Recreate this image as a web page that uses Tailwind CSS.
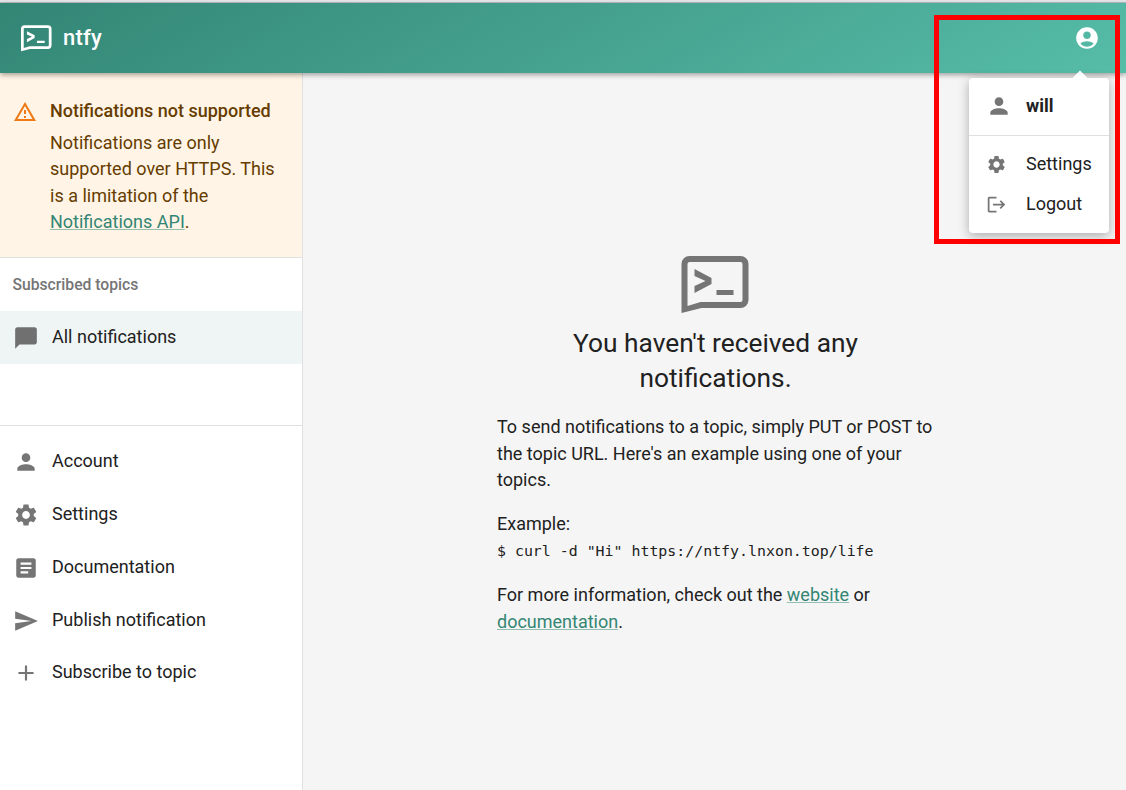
<!DOCTYPE html>
<html lang="en">
<head>
  <meta charset="UTF-8">
  <script src="https://cdn.jsdelivr.net/npm/@tailwindcss/browser@4"></script>
  <title>ntfy</title>
</head>
<body class="font-['Roboto',sans-serif] text-[18px] leading-[26.5px] text-[#212121] overflow-hidden">
  <div class="relative w-[1126px] h-[790px] flex flex-col bg-white overflow-hidden">
    <div class="h-[3px] bg-[#e4e6ea] border-b border-[#b9bcc0]"></div>

    <!-- Header -->
    <header class="relative z-10 h-[70px] flex items-center justify-between pl-[21px] pr-[26px] bg-linear-[150deg,#338574_0%,#56bda8_100%] text-white shadow-[0_2px_5px_rgba(0,0,0,0.35)]">
      <div class="flex items-center gap-[11px]">
        <svg class="w-[31px] h-[27px] mt-px fill-white" viewBox="0 0 68 58"><path fill-rule="evenodd" d="M8 0H59a8 8 0 0 1 8 8V44a8 8 0 0 1-8 8H20L0 57V8a8 8 0 0 1 8-8zM8 6a2 2 0 0 0-2 2V50L19 46H59a2 2 0 0 0 2-2V8a2 2 0 0 0-2-2zM13 13L30 22V28L13 37V30L24 25L13 20zM35 34H52V39H35z"/></svg>
        <span class="text-[22px] font-medium tracking-[0.2px]">ntfy</span>
      </div>
      <svg class="w-[26px] h-[26px] -mt-[1px] fill-white" viewBox="0 0 24 24"><path d="M12 2C6.48 2 2 6.48 2 12s4.48 10 10 10 10-4.48 10-10S17.52 2 12 2zm0 4c1.93 0 3.5 1.57 3.5 3.5S13.93 13 12 13s-3.5-1.57-3.5-3.5S10.07 6 12 6zm0 14c-2.03 0-4.43-.82-6.14-2.88C7.55 15.8 9.68 15 12 15s4.45.8 6.14 2.12C16.43 19.18 14.03 20 12 20z"/></svg>
    </header>

    <div class="flex flex-1 min-h-0">
      <!-- Sidebar -->
      <aside class="w-[303px] shrink-0 bg-white border-r border-[#e0e0e0] flex flex-col">
        <div class="h-[185px] bg-[#fff4e5] border-b border-[#e0e0e0] pl-[13px] pr-4 pt-[25px] flex gap-[13px] text-[#663c00]">
          <svg class="w-[24px] h-[24px] mt-[2px] shrink-0 fill-[#ed7a17]" viewBox="0 0 24 24"><path d="M12 5.99 19.53 19H4.47L12 5.99M12 2 1 21h22L12 2zm1 14h-2v2h2v-2zm0-6h-2v4h2v-4z"/></svg>
          <div>
            <div class="font-medium">Notifications not supported</div>
            <p class="mt-[5px]">Notifications are only supported over HTTPS. This is a limitation of the <a class="text-[#338574] underline decoration-[#338574]/50">Notifications API</a>.</p>
          </div>
        </div>
        <div class="h-[53px] pl-[12.5px] pt-[14px] text-[15.7px] font-medium text-[#757575]">Subscribed topics</div>
        <div class="h-[53px] bg-[#eff4f4] pl-[13px] flex items-center gap-[13px]">
          <svg class="w-[26px] h-[26px] fill-[#707070]" viewBox="0 0 24 24"><path d="M20 2H4c-1.1 0-1.99.9-1.99 2L2 22l4-4h14c1.1 0 2-.9 2-2V4c0-1.1-.9-2-2-2z"/></svg>
          <span>All notifications</span>
        </div>
        <div class="h-[62px] border-b border-[#e0e0e0]"></div>
        <nav class="pt-[9px]">
          <div class="h-[53px] pl-[13px] flex items-center gap-[13px]">
            <svg class="w-[26px] h-[26px] fill-[#757575]" viewBox="0 0 24 24"><path d="M12 12c2.21 0 4-1.79 4-4s-1.79-4-4-4-4 1.79-4 4 1.79 4 4 4zm0 2c-2.67 0-8 1.34-8 4v2h16v-2c0-2.66-5.33-4-8-4z"/></svg>
            <span>Account</span>
          </div>
          <div class="h-[53px] pl-[13px] flex items-center gap-[13px]">
            <svg class="w-[26px] h-[26px] fill-[#757575]" viewBox="0 0 24 24"><path d="M19.14 12.94c.04-.3.06-.61.06-.94 0-.32-.02-.64-.07-.94l2.03-1.58c.18-.14.23-.41.12-.61l-1.92-3.32c-.12-.22-.37-.29-.59-.22l-2.39.96c-.5-.38-1.03-.7-1.62-.94l-.36-2.54c-.04-.24-.24-.41-.48-.41h-3.84c-.24 0-.43.17-.47.41l-.36 2.54c-.59.24-1.13.57-1.62.94l-2.39-.96c-.22-.08-.47 0-.59.22L2.74 8.87c-.12.21-.08.47.12.61l2.03 1.58c-.05.3-.09.63-.09.94s.02.64.07.94l-2.03 1.58c-.18.14-.23.41-.12.61l1.92 3.32c.12.22.37.29.59.22l2.39-.96c.5.38 1.03.7 1.62.94l.36 2.54c.05.24.24.41.48.41h3.84c.24 0 .44-.17.47-.41l.36-2.54c.59-.24 1.13-.56 1.62-.94l2.39.96c.22.08.47 0 .59-.22l1.92-3.32c.12-.22.07-.47-.12-.61l-2.01-1.58zM12 15.6c-1.98 0-3.6-1.62-3.6-3.6s1.62-3.6 3.6-3.6 3.6 1.62 3.6 3.6-1.62 3.6-3.6 3.6z"/></svg>
            <span>Settings</span>
          </div>
          <div class="h-[53px] pl-[13px] flex items-center gap-[13px]">
            <svg class="w-[26px] h-[26px] fill-[#757575]" viewBox="0 0 24 24"><path d="M19 3H5c-1.1 0-2 .9-2 2v14c0 1.1.9 2 2 2h14c1.1 0 2-.9 2-2V5c0-1.1-.9-2-2-2zm-5 14H7v-2h7v2zm3-4H7v-2h10v2zm0-4H7V7h10v2z"/></svg>
            <span>Documentation</span>
          </div>
          <div class="h-[53px] pl-[13px] flex items-center gap-[13px]">
            <svg class="w-[26px] h-[26px] fill-[#757575]" viewBox="0 0 24 24"><path d="M2.01 21 23 12 2.01 3 2 10l15 2-15 2z"/></svg>
            <span>Publish notification</span>
          </div>
          <div class="h-[53px] -mt-px pl-[13px] flex items-center gap-[13px]">
            <svg class="w-[26px] h-[26px] fill-[#757575]" viewBox="0 0 24 24"><path d="M19 13h-6v6h-2v-6H5v-2h6V5h2v6h6v2z"/></svg>
            <span>Subscribe to topic</span>
          </div>
        </nav>
      </aside>

      <!-- Main -->
      <main class="flex-1 bg-[#f5f5f5] pt-[183px]">
        <div class="w-[437px] ml-[194px]">
          <div class="flex flex-col items-center">
            <svg class="w-[69px] h-[58px] fill-[#757575]" viewBox="0 0 68 58"><path fill-rule="evenodd" d="M8 0H59a8 8 0 0 1 8 8V44a8 8 0 0 1-8 8H20L0 57V8a8 8 0 0 1 8-8zM8 6a2 2 0 0 0-2 2V50L19 46H59a2 2 0 0 0 2-2V8a2 2 0 0 0-2-2zM13 13L30 22V28L13 37V30L24 25L13 20zM35 34H52V39H35z"/></svg>
            <h2 class="mt-[12px] text-[26.3px] leading-[35px] text-center w-[340px]">You haven't received any notifications.</h2>
          </div>
          <p class="mt-[18px]">To send notifications to a topic, simply PUT or POST to the topic URL. Here's an example using one of your topics.</p>
          <p class="mt-[17px]">Example:<br><code class="font-['DejaVu_Sans_Mono',monospace] text-[14.9px] leading-[27px]">$ curl -d "Hi" https://ntfy.lnxon.top/life</code></p>
          <p class="mt-[17px]">For more information, check out the <a class="text-[#338574] underline decoration-[#338574]/50">website</a> or <a class="text-[#338574] underline decoration-[#338574]/50">documentation</a>.</p>
        </div>
      </main>
    </div>

    <!-- Account menu -->
    <div class="absolute left-[969px] top-[78px] w-[140px] h-[155px] z-20 bg-white rounded-[4px] shadow-[0_3px_12px_rgba(0,0,0,0.3)]">
      <div class="absolute -top-[5px] left-[105px] w-[12px] h-[12px] rotate-45 bg-white"></div>
      <div class="relative h-[58px] pb-px pl-[17px] flex items-center gap-[14px] border-b border-[#e0e0e0] font-bold">
        <svg class="w-[26px] h-[26px] fill-[#757575]" viewBox="0 0 24 24"><path d="M12 12c2.21 0 4-1.79 4-4s-1.79-4-4-4-4 1.79-4 4 1.79 4 4 4zm0 2c-2.67 0-8 1.34-8 4v2h16v-2c0-2.66-5.33-4-8-4z"/></svg>
        <span>will</span>
      </div>
      <div class="pt-[8px]">
        <div class="h-[40px] pl-[17px] flex items-center gap-[19px]">
          <svg class="w-[21px] h-[21px] fill-[#757575]" viewBox="0 0 24 24"><path d="M19.14 12.94c.04-.3.06-.61.06-.94 0-.32-.02-.64-.07-.94l2.03-1.58c.18-.14.23-.41.12-.61l-1.92-3.32c-.12-.22-.37-.29-.59-.22l-2.39.96c-.5-.38-1.03-.7-1.62-.94l-.36-2.54c-.04-.24-.24-.41-.48-.41h-3.84c-.24 0-.43.17-.47.41l-.36 2.54c-.59.24-1.13.57-1.62.94l-2.39-.96c-.22-.08-.47 0-.59.22L2.74 8.87c-.12.21-.08.47.12.61l2.03 1.58c-.05.3-.09.63-.09.94s.02.64.07.94l-2.03 1.58c-.18.14-.23.41-.12.61l1.92 3.32c.12.22.37.29.59.22l2.39-.96c.5.38 1.03.7 1.62.94l.36 2.54c.05.24.24.41.48.41h3.84c.24 0 .44-.17.47-.41l.36-2.54c.59-.24 1.13-.56 1.62-.94l2.39.96c.22.08.47 0 .59-.22l1.92-3.32c.12-.22.07-.47-.12-.61l-2.01-1.58zM12 15.6c-1.98 0-3.6-1.62-3.6-3.6s1.62-3.6 3.6-3.6 3.6 1.62 3.6 3.6-1.62 3.6-3.6 3.6z"/></svg>
          <span>Settings</span>
        </div>
        <div class="h-[40px] pl-[17px] flex items-center gap-[19px]">
          <svg class="w-[21px] h-[21px] fill-[#757575]" viewBox="0 0 24 24"><path d="m17 7-1.41 1.41L18.17 11H8v2h10.17l-2.58 2.58L17 17l5-5zM4 5h8V3H4c-1.1 0-2 .9-2 2v14c0 1.1.9 2 2 2h8v-2H4V5z"/></svg>
          <span>Logout</span>
        </div>
      </div>
    </div>

    <!-- Annotation box -->
    <div class="absolute left-[934px] top-[15px] w-[186px] h-[229px] z-30 border-[5px] border-[#ff0000] pointer-events-none"></div>
  </div>
</body>
</html>
